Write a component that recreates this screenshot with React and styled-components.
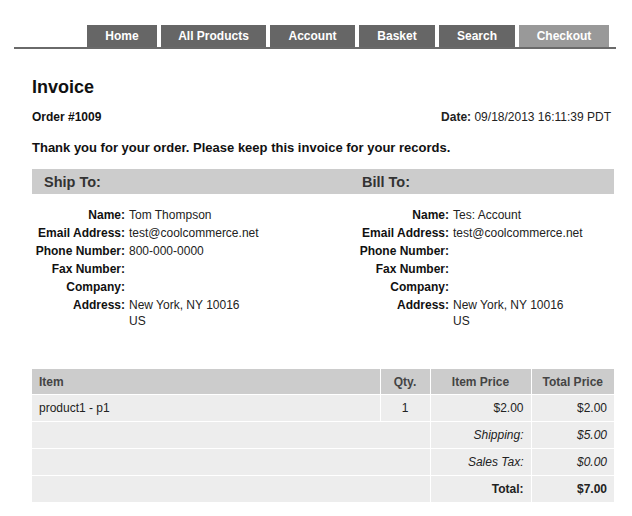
import React from 'react'
import styled, { createGlobalStyle } from 'styled-components'

const tabs = [
  { name: 'Home', width: 70 },
  { name: 'All Products', width: 105 },
  { name: 'Account', width: 85 },
  { name: 'Basket', width: 76 },
  { name: 'Search', width: 76 },
  { name: 'Checkout', width: 90, active: true },
]

const ship = [
  ['Name:', 'Tom Thompson'],
  ['Email Address:', 'test@coolcommerce.net'],
  ['Phone Number:', '800-000-0000'],
  ['Fax Number:', ''],
  ['Company:', ''],
  ['Address:', 'New York, NY 10016\nUS'],
]

const bill = [
  ['Name:', 'Tes: Account'],
  ['Email Address:', 'test@coolcommerce.net'],
  ['Phone Number:', ''],
  ['Fax Number:', ''],
  ['Company:', ''],
  ['Address:', 'New York, NY 10016\nUS'],
]

const Party = ({ rows, labelWidth }) => (
  <PartyGrid $labelWidth={labelWidth}>
    {rows.map(([label, value]) => (
      <React.Fragment key={label}>
        <Label>{label}</Label>
        <Value>{value}</Value>
      </React.Fragment>
    ))}
  </PartyGrid>
)

const App = () => {
  return (
    <>
      <GlobalStyle />
      <Page>
        <Nav>
          <Tabs>
            {tabs.map((tab) => (
              <Tab key={tab.name} $width={tab.width} $active={tab.active}>
                {tab.name}
              </Tab>
            ))}
          </Tabs>
        </Nav>
        <Content>
          <Title>Invoice</Title>
          <MetaRow>
            <Order>Order #1009</Order>
            <DateText>
              <b>Date:</b> 09/18/2013 16:11:39 PDT
            </DateText>
          </MetaRow>
          <Thanks>Thank you for your order. Please keep this invoice for your records.</Thanks>
          <AddressBar>
            <BarTitle $width={318}>Ship To:</BarTitle>
            <BarTitle>Bill To:</BarTitle>
          </AddressBar>
          <Parties>
            <PartyCol $width={318}>
              <Party rows={ship} labelWidth={93} />
            </PartyCol>
            <PartyCol>
              <Party rows={bill} labelWidth={99} />
            </PartyCol>
          </Parties>
          <Table>
            <colgroup>
              <col />
              <col style={{ width: 50 }} />
              <col style={{ width: 101 }} />
              <col style={{ width: 83 }} />
            </colgroup>
            <thead>
              <tr>
                <Th>Item</Th>
                <Th $align="center">Qty.</Th>
                <Th $align="center">Item Price</Th>
                <Th $align="center">Total Price</Th>
              </tr>
            </thead>
            <tbody>
              <tr>
                <Td>product1 - p1</Td>
                <Td $align="center">1</Td>
                <Td $align="right">$2.00</Td>
                <Td $align="right">$2.00</Td>
              </tr>
              <tr>
                <Td colSpan={2} />
                <Td $align="right" $italic>Shipping:</Td>
                <Td $align="right" $italic>$5.00</Td>
              </tr>
              <tr>
                <Td colSpan={2} />
                <Td $align="right" $italic>Sales Tax:</Td>
                <Td $align="right" $italic>$0.00</Td>
              </tr>
              <tr>
                <Td colSpan={2} />
                <Td $align="right" $bold>Total:</Td>
                <Td $align="right" $bold>$7.00</Td>
              </tr>
            </tbody>
          </Table>
        </Content>
      </Page>
    </>
  )
}

export default App

const GlobalStyle = createGlobalStyle`
  body {
    margin: 0;
    background: #fff;
    font-family: "Liberation Sans", Arial, Helvetica, sans-serif;
    color: #111;
  }
`
const Page = styled.div`
  width: 632px;
  height: 516px;
  overflow: hidden;
`
const Nav = styled.nav`
  margin: 0 16px 0 14px;
  padding-top: 25px;
  border-bottom: 2px solid #6a6a6a;
`
const Tabs = styled.div`
  display: flex;
  gap: 4px;
  margin-left: 73px;
`
const Tab = styled.div`
  width: ${(p) => p.$width}px;
  height: 22px;
  line-height: 22px;
  text-align: center;
  background: ${(p) => (p.$active ? '#999' : '#666')};
  color: #fff;
  font-size: 12px;
  font-weight: bold;
`
const Content = styled.main`
  padding: 0 18px 0 32px;
`
const Title = styled.h1`
  margin: 27px 0 0;
  font-size: 18px;
  line-height: 22px;
  font-weight: bold;
`
const MetaRow = styled.div`
  display: flex;
  justify-content: space-between;
  margin-top: 12px;
  padding-right: 3px;
  font-size: 12px;
  line-height: 15px;
`
const Order = styled.div`
  font-weight: bold;
`
const DateText = styled.div`
  color: #222;
`
const Thanks = styled.p`
  margin: 15px 0 0;
  font-size: 13px;
  line-height: 16px;
  font-weight: bold;
`
const AddressBar = styled.div`
  display: flex;
  margin-top: 13px;
  height: 25px;
  align-items: center;
  background: #ccc;
`
const BarTitle = styled.div`
  ${(p) => (p.$width ? `width: ${p.$width}px;` : 'flex: 1;')}
  padding-left: 12px;
  box-sizing: border-box;
  font-size: 14.5px;
  font-weight: bold;
  color: #333;
`
const Parties = styled.div`
  display: flex;
  margin-top: 13px;
`
const PartyCol = styled.div`
  ${(p) => (p.$width ? `width: ${p.$width}px;` : 'flex: 1;')}
`
const PartyGrid = styled.div`
  display: grid;
  grid-template-columns: ${(p) => p.$labelWidth}px 1fr;
  column-gap: 4px;
  row-gap: 2px;
  font-size: 12px;
  line-height: 16px;
`
const Label = styled.div`
  text-align: right;
  font-weight: bold;
  white-space: nowrap;
`
const Value = styled.div`
  white-space: pre-line;
  color: #222;
`
const Table = styled.table`
  width: 582px;
  margin-top: 40px;
  border-collapse: collapse;
  table-layout: fixed;
  font-size: 12px;
`
const Th = styled.th`
  height: 25px;
  padding: 0 7px;
  background: #ccc;
  border: 1px solid #fff;
  border-top: none;
  text-align: ${(p) => p.$align || 'left'};
  font-weight: bold;
  color: #444;
  &:first-child { border-left: none; }
  &:last-child { border-right: none; }
`
const Td = styled.td`
  height: 26px;
  padding: 0 7px;
  background: #ededed;
  border: 1px solid #fff;
  text-align: ${(p) => p.$align || 'left'};
  font-style: ${(p) => (p.$italic ? 'italic' : 'normal')};
  font-weight: ${(p) => (p.$bold ? 'bold' : 'normal')};
  color: #222;
  &:first-child { border-left: none; }
  &:last-child { border-right: none; }
`
